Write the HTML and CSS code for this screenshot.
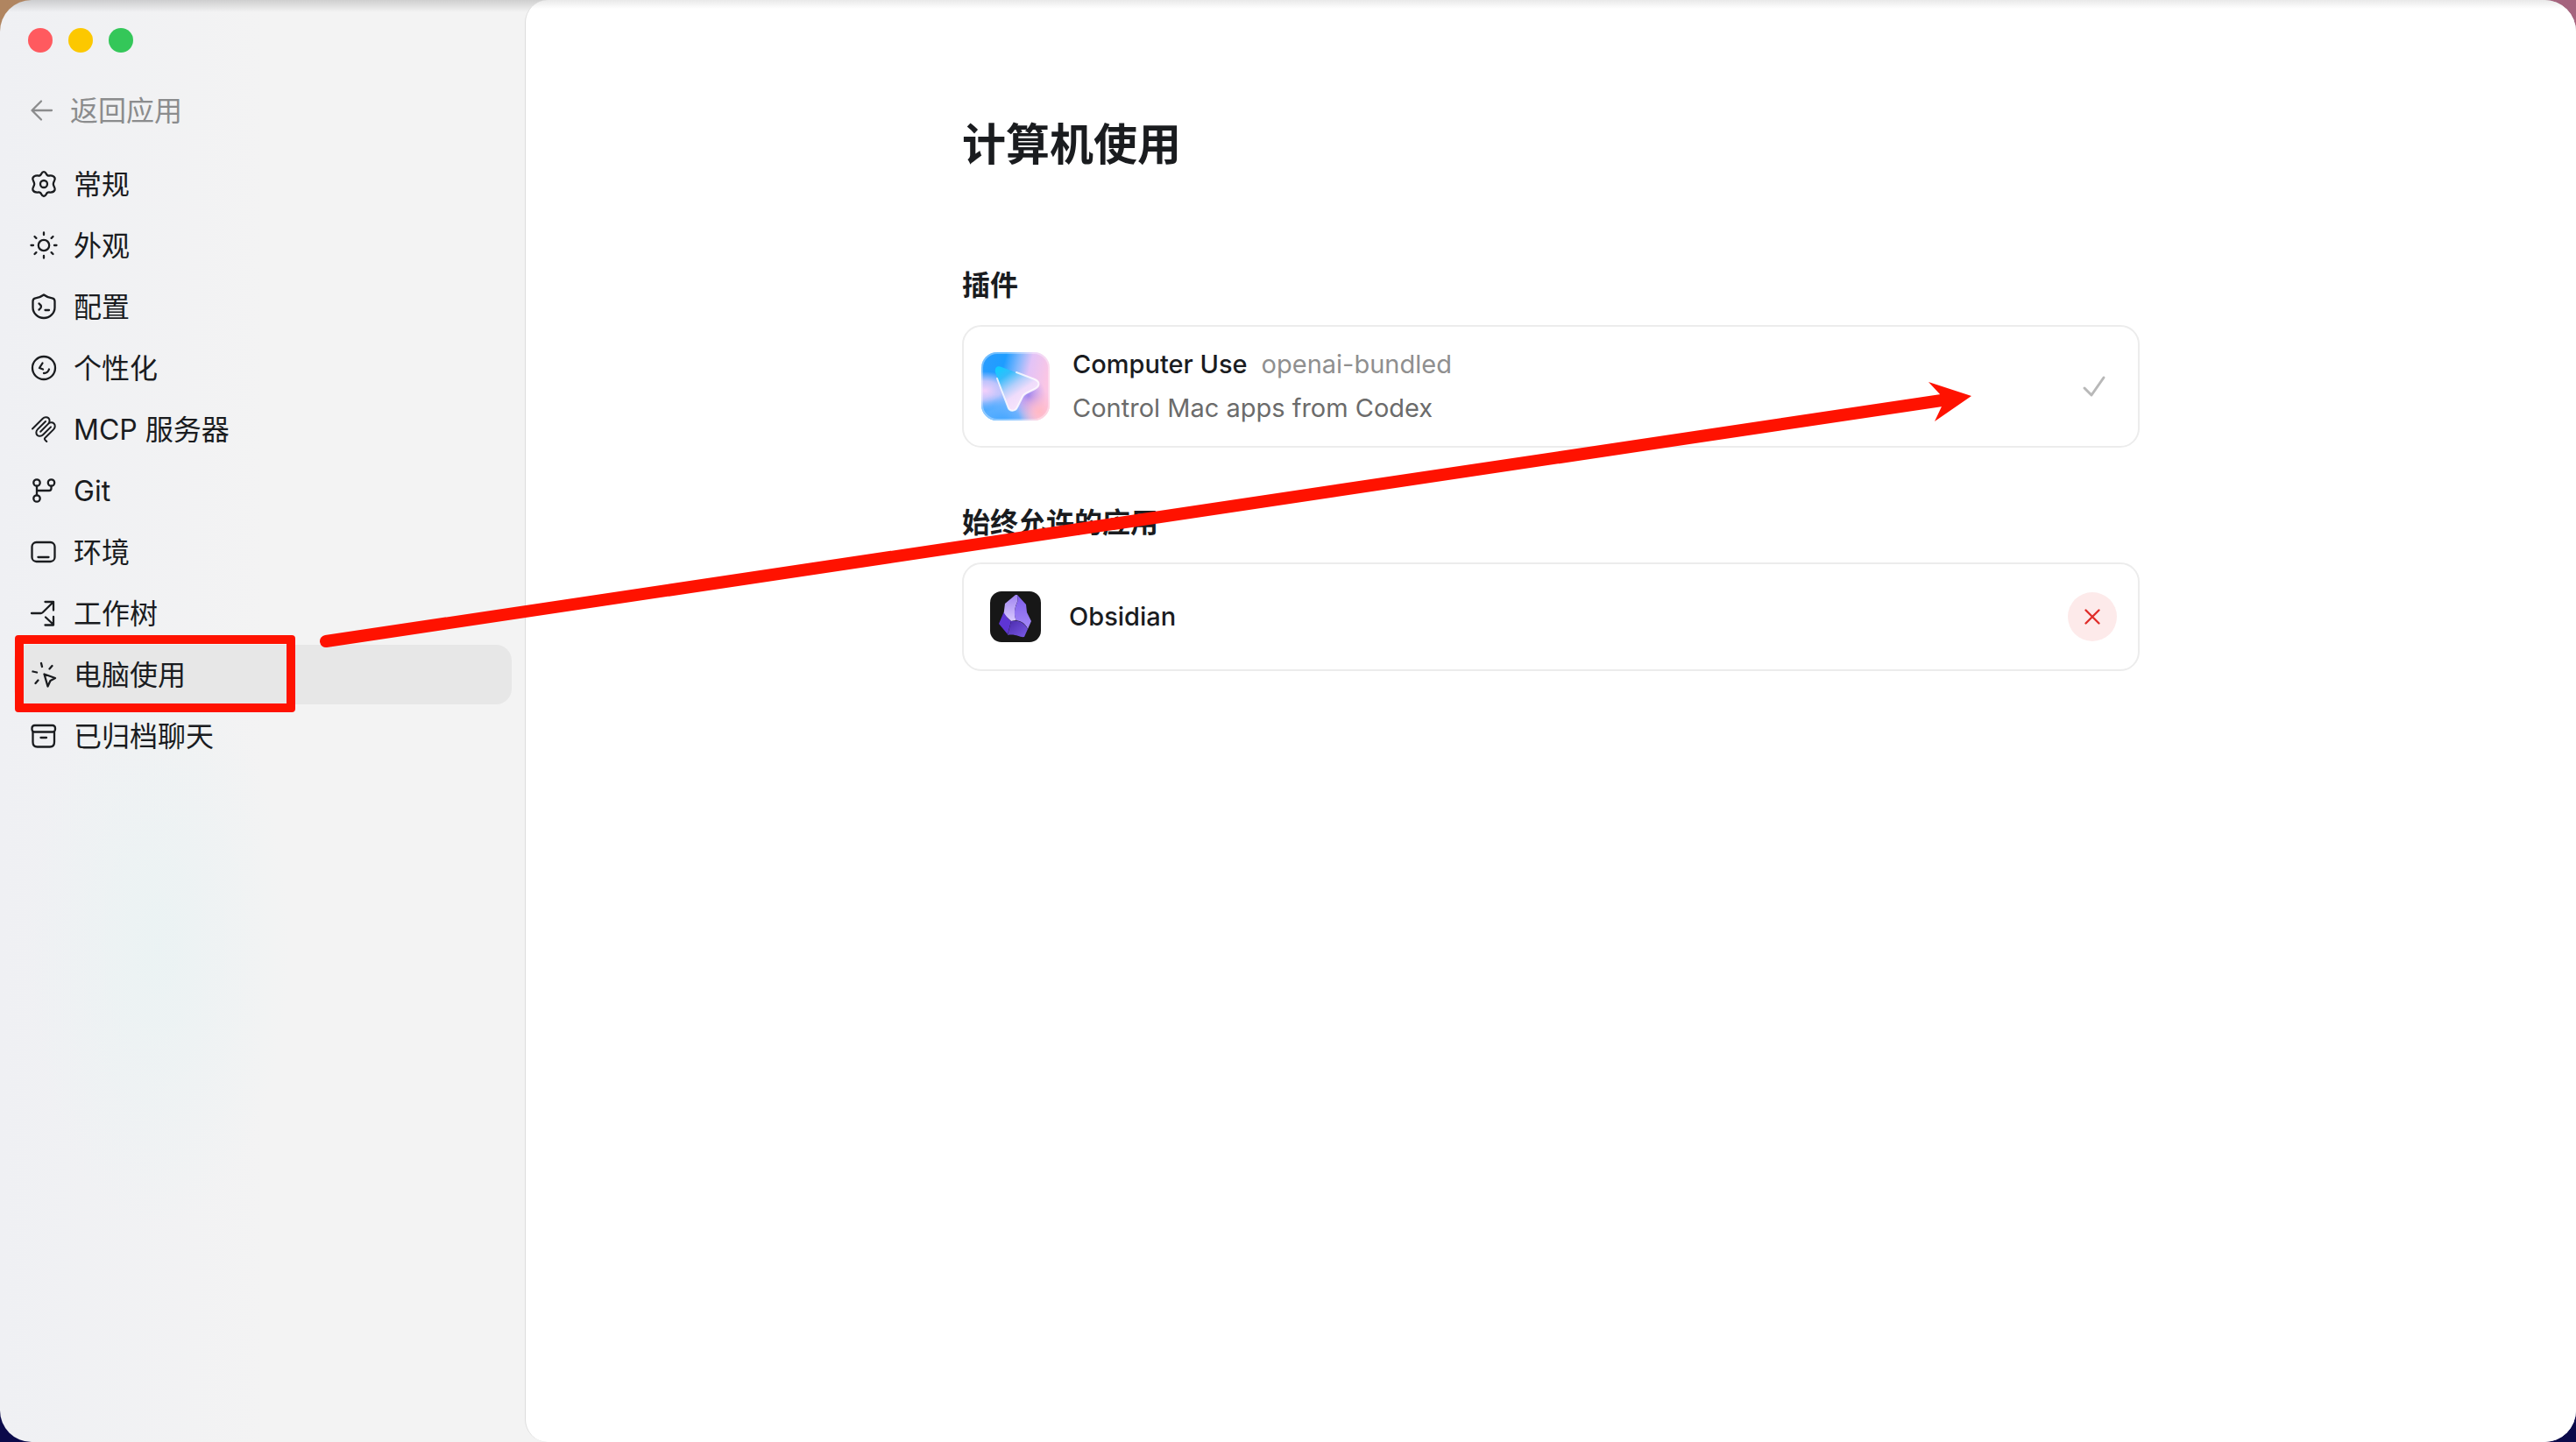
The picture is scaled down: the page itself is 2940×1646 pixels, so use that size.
FILE: index.html
```html
<!DOCTYPE html>
<html lang="zh-CN">
<head>
<meta charset="utf-8">
<title>计算机使用</title>
<link rel="stylesheet" href="styles.css">
</head>
<body>
<div class="window">
  <aside class="sidebar">
    <div class="lights">
      <button class="light light-close" aria-label="关闭"></button>
      <button class="light light-min" aria-label="最小化"></button>
      <button class="light light-max" aria-label="缩放"></button>
    </div>
    <a class="back" href="#">
      <svg class="icon" viewBox="0 0 32 32"><path d="M27 16H5M15 5.500L4.500 16L15 26.500"/></svg>
      <span class="label">返回应用</span>
    </a>
    <nav class="nav">
      <a class="item" href="#">
        <svg class="icon" viewBox="0 0 32 32"><path d="M13.300 4.200C14.600 1.300 17.400 1.300 18.700 4.200C19.500 6.200 20.500 6.800 22.600 6.500C25.800 6.200 27.600 6.900 28.600 9.300C29.400 11.300 26.900 13 26.800 16C26.900 19 29.400 20.700 28.600 22.700C27.600 25.100 25.800 25.800 22.600 25.500C20.500 25.200 19.500 25.800 18.700 27.800C17.400 30.700 14.600 30.700 13.300 27.800C12.500 25.800 11.500 25.200 9.400 25.500C6.200 25.800 4.400 25.100 3.400 22.700C2.600 20.700 5.100 19 5.200 16C5.100 13 2.600 11.300 3.400 9.300C4.400 6.900 6.200 6.200 9.400 6.500C11.500 6.800 12.500 6.200 13.300 4.200Z"/><circle cx="16" cy="16" r="4"/></svg>
        <span class="label">常规</span>
      </a>
      <a class="item" href="#">
        <svg class="icon" viewBox="0 0 32 32"><circle cx="16" cy="16" r="6.200"/><path d="M16 1.500V4M16 28V30.500M1.500 16H4M28 16H30.500M5.500 6L7.400 7.900M24.600 24.100L26.500 26M5.500 26L7.400 24.100M24.600 7.900L26.500 6"/></svg>
        <span class="label">外观</span>
      </a>
      <a class="item" href="#">
        <svg class="icon" viewBox="0 0 32 32"><path d="M16 2.500C18.500 4.500 22.500 5.800 25.500 6.300C27.500 6.700 28.500 7.800 28.500 10V17C28.500 23.500 23 29 16 29S3.500 23.500 3.500 17V10C3.500 7.800 4.500 6.700 6.500 6.300C9.500 5.800 13.500 4.500 16 2.500Z"/><path d="M10.500 12.500C12.500 14 13 15 13 16S12.500 18 10.500 19.500M17.500 20H22"/></svg>
        <span class="label">配置</span>
      </a>
      <a class="item" href="#">
        <svg class="icon" viewBox="0 0 32 32"><circle cx="16" cy="16" r="13"/><path d="M14.500 10.500L11 16L15 17.500M16 22C19 22 21 20.500 22 17.500"/></svg>
        <span class="label">个性化</span>
      </a>
      <a class="item" href="#">
        <svg class="icon icon-fine" viewBox="0 0 32 32"><path d="M3 15.500L14.800 3.700C16.800 1.700 19.800 1.700 21.400 3.300C23 4.900 23 7.900 21 9.900L12.200 18.700M21 9.900C23 7.900 26 7.900 27.600 9.500C29.200 11.100 29.200 14.100 27.200 16.100L17.500 25.800C16.700 26.600 16.700 27.400 17.500 28.200L19.300 30M18 7L8.900 16.100C6.900 18.100 6.900 21.100 8.500 22.700C10.100 24.300 13.100 24.300 15.100 22.300L24 13.400"/></svg>
        <span class="label">MCP 服务器</span>
      </a>
      <a class="item" href="#">
        <svg class="icon" viewBox="0 0 32 32"><circle cx="8" cy="7" r="3.700"/><circle cx="24.500" cy="7" r="3.700"/><circle cx="8" cy="25" r="3.700"/><path d="M8 10.700V21.300M8 16H22C23.500 16 24.500 15 24.500 13.500V10.700"/></svg>
        <span class="label">Git</span>
      </a>
      <a class="item" href="#">
        <svg class="icon" viewBox="0 0 32 32"><rect x="2.500" y="5" width="26" height="22" rx="5"/><path d="M9.500 22H21.500"/></svg>
        <span class="label">环境</span>
      </a>
      <a class="item" href="#">
        <svg class="icon" viewBox="0 0 32 32"><path d="M2 16H12.500C13.500 16 14 15.700 14.800 15L26.500 3.500M17.500 3H27V12.500M18 20.500L26.500 28.500M17.500 29.500H27V20"/></svg>
        <span class="label">工作树</span>
      </a>
      <a class="item item-active" href="#" aria-current="page">
        <svg class="icon" viewBox="0 0 32 32"><path d="M16.500 15.500L29 20L23.500 23L20.500 29.500ZM13 3L14 7M25.500 6L22.500 9.500M3.500 12.500L8 13.500M9.500 22.500L6.500 26"/></svg>
        <span class="label">电脑使用</span>
      </a>
      <a class="item" href="#">
        <svg class="icon" viewBox="0 0 32 32"><rect x="2.500" y="4" width="26.500" height="7.500" rx="3"/><path d="M3.500 11.500V23C3.500 26.500 5 28.500 8.500 28.500H23C26.500 28.500 28 26.500 28 23V11.500M12.500 18H19"/></svg>
        <span class="label">已归档聊天</span>
      </a>
    </nav>
  </aside>
  <main class="main">
    <div class="content">
      <h1 class="title">计算机使用</h1>
      <section class="group">
        <h2 class="heading">插件</h2>
        <div class="card card-plugin">
          <svg class="plugin-icon" viewBox="0 0 78 78" aria-hidden="true">
            <defs>
              <linearGradient id="sky" x1="0" y1="0" x2="1" y2="0.250"><stop offset="0" stop-color="#2b9cff"/><stop offset="0.350" stop-color="#1e9dff"/><stop offset="0.550" stop-color="#86b8fd"/><stop offset="0.720" stop-color="#e2c3f7"/><stop offset="1" stop-color="#fbc6e4"/></linearGradient>
              <radialGradient id="pink"><stop offset="0" stop-color="#f3d0fa"/><stop offset="0.500" stop-color="#e4cdfb" stop-opacity="0.800"/><stop offset="1" stop-color="#e4cdfb" stop-opacity="0"/></radialGradient>
              <radialGradient id="blue"><stop offset="0" stop-color="#3fa5ff"/><stop offset="0.500" stop-color="#5fb0ff" stop-opacity="0.900"/><stop offset="1" stop-color="#7db8ff" stop-opacity="0"/></radialGradient>
              <radialGradient id="shade"><stop offset="0" stop-color="#8673ee" stop-opacity="0.800"/><stop offset="1" stop-color="#a98bf2" stop-opacity="0"/></radialGradient>
              <radialGradient id="peach"><stop offset="0" stop-color="#ffb9c4"/><stop offset="1" stop-color="#ffb9d0" stop-opacity="0"/></radialGradient>
              <linearGradient id="pointer" x1="0" y1="0" x2="0.700" y2="1"><stop offset="0" stop-color="#08d0ff"/><stop offset="0.250" stop-color="#35bcfb"/><stop offset="0.480" stop-color="#b4cffb"/><stop offset="0.650" stop-color="#efdcfb"/><stop offset="1" stop-color="#fbe8fb"/></linearGradient>
              <clipPath id="tile"><rect width="78" height="78" rx="18"/></clipPath>
            </defs>
            <g clip-path="url(#tile)">
              <rect width="78" height="78" fill="url(#sky)"/>
              <ellipse cx="4" cy="44" rx="36" ry="22" fill="url(#pink)"/>
              <ellipse cx="24" cy="80" rx="42" ry="32" fill="url(#blue)"/>
              <ellipse cx="54" cy="50" rx="20" ry="22" fill="url(#shade)"/>
              <ellipse cx="66" cy="68" rx="24" ry="24" fill="url(#peach)"/>
            </g>
            <rect x="1" y="1" width="76" height="76" rx="17" fill="none" stroke="#fff" stroke-opacity="0.350" stroke-width="2"/>
            <path d="M16 23C15 18 18 15 23 17L61 31C67 33.500 67 39 61 42L51 47C48 48.500 47 50 46 53L41 63C39 68 32 68 30.500 63Z" fill="url(#pointer)"/>
            <path d="M18 30L30.500 63C32 68 39 68 41 63L46 53C47 50 48 48.500 51 47L61 42C67 39 67 33.500 61 31L40 23" fill="none" stroke="#fff" stroke-opacity="0.800" stroke-width="2" stroke-linecap="round"/>
          </svg>
          <div class="plugin-text">
            <div class="plugin-name"><strong class="name">Computer Use</strong><span class="source">openai-bundled</span></div>
            <p class="desc">Control Mac apps from Codex</p>
          </div>
          <svg class="check" viewBox="0 0 32 32" role="img" aria-label="已安装"><path d="M5 18L13 26L27 6"/></svg>
        </div>
      </section>
      <section class="group">
        <h2 class="heading">始终允许的应用</h2>
        <div class="card card-app">
          <svg class="app-icon" viewBox="0 0 58 58" aria-hidden="true">
            <defs>
              <linearGradient id="pale" x1="0.500" y1="0" x2="0.500" y2="1"><stop offset="0" stop-color="#a084f0"/><stop offset="1" stop-color="#d8c9ff"/></linearGradient>
              <linearGradient id="violet" x1="0.500" y1="0" x2="0.500" y2="1"><stop offset="0" stop-color="#7d5cea"/><stop offset="1" stop-color="#a58af8"/></linearGradient>
              <linearGradient id="base" x1="0" y1="0" x2="1" y2="1"><stop offset="0" stop-color="#4a2bab"/><stop offset="1" stop-color="#7a5ae6"/></linearGradient>
            </defs>
            <rect width="58" height="58" rx="13" fill="#171717"/>
            <path d="M29 4L17 14L15.500 26L24 34L29.500 33C27 25 28 18 31.500 11L31 4Z" fill="url(#pale)"/>
            <path d="M31 4L41 15L42 24L47 34L43 43C40 36 35 34 29.500 33C26 24 29 17 31.500 11Z" fill="url(#violet)"/>
            <path d="M15.500 24L10 37L20 49L24 34C20 31 18 28 15.500 24Z" fill="#5e35d4"/>
            <path d="M24 34C33 32 39 36 43 43L39 52C34 53 29 48 20 50Z" fill="url(#base)"/>
          </svg>
          <span class="app-name">Obsidian</span>
          <button class="remove" aria-label="移除 Obsidian"><svg class="cross" viewBox="0 0 20 20"><path d="M2.500 2.500L17.500 17.500M17.500 2.500L2.500 17.500"/></svg></button>
        </div>
      </section>
    </div>
  </main>
  <div class="mark-box"></div>
  <svg class="mark-arrow" aria-hidden="true">
    <path d="M372 732L2216 457" fill="none" stroke="#ff1200" stroke-width="14" stroke-linecap="round"/>
    <path d="M2250 452L2201 436L2214 450L2216 464L2208 481Z" fill="#ff1200"/>
  </svg>
</div>
</body>
</html>
```
FILE: styles.css
```css
* {
  box-sizing: border-box;
}

body {
  margin: 0;
  background: linear-gradient(90deg, #b08560, #a5647e) top / 100% 50% no-repeat, #0b0a4a;
  font-family: Inter, "Noto Sans CJK SC", sans-serif;
  font-size: 32px;
  line-height: 48px;
  color: #1a1c1f;
}

h1, h2, p {
  margin: 0;
}

button {
  padding: 0;
  border: 0;
}

a {
  color: inherit;
  text-decoration: none;
}

.window {
  position: relative;
  display: flex;
  min-height: 100vh;
  overflow: hidden;
  border-radius: 36px;
  background:
    linear-gradient(rgba(0, 0, 0, 0.15), rgba(0, 0, 0, 0) 14px),
    radial-gradient(150px 320px at 180px 1080px, rgba(232, 243, 243, 0.7), rgba(232, 243, 243, 0)),
    linear-gradient(90deg, #eff0f3, #f3f3f3 300px);
}

.sidebar {
  flex: none;
  width: 599px;
  padding: 32px 15px 32px 16px;
}

.lights {
  display: flex;
  gap: 18px;
  padding-left: 16px;
}

.light {
  width: 28px;
  height: 28px;
  border-radius: 50%;
}

.light-close { background: #ff5a5f; }
.light-min { background: #fcc800; }
.light-max { background: #34c759; }

.back {
  display: flex;
  align-items: center;
  gap: 16px;
  height: 68px;
  margin-top: 32px;
  padding-left: 16px;
  color: #8b8c8d;
}

.label {
  padding-top: 2px;
}

.icon {
  flex: none;
  width: 32px;
  height: 32px;
  fill: none;
  stroke: currentColor;
  stroke-width: 2.3;
  stroke-linecap: round;
  stroke-linejoin: round;
}

.icon-fine {
  stroke-width: 2;
}

.nav {
  display: flex;
  flex-direction: column;
  gap: 2px;
  margin-top: 16px;
}

.item {
  display: flex;
  align-items: center;
  gap: 18px;
  height: 68px;
  padding-left: 18px;
  border-radius: 18px;
}

.item-active {
  background: #e7e7e7;
}

.main {
  flex: 1;
  padding: 128px 48px;
  border-left: 1px solid #dcdcdc;
  border-radius: 26px;
  background: linear-gradient(#e9e9e9, #fff 10px);
}

.content {
  max-width: 1344px;
  margin: 0 auto;
}

.title {
  font-size: 50px;
  line-height: 74px;
  font-weight: 600;
}

.group {
  margin-top: 62px;
}

.title + .group {
  margin-top: 100px;
}

.heading {
  margin-bottom: 21px;
  font-size: 32px;
  line-height: 48px;
  font-weight: 600;
}

.card {
  display: flex;
  align-items: center;
  border: 2px solid #ececec;
  border-radius: 22px;
  background: #fff;
}

.card-plugin {
  gap: 26px;
  padding: 18px 34px 18px 20px;
}

.card-app {
  gap: 32px;
  padding: 31px 24px 31px 30px;
}

.plugin-icon {
  flex: none;
  width: 78px;
  height: 78px;
}

.plugin-text {
  flex: 1;
  font-size: 29px;
  line-height: 50px;
}

.plugin-name {
  display: flex;
  gap: 16px;
}

.name {
  font-weight: 500;
}

.source {
  color: #8f8f8f;
}

.desc {
  color: #6b6b6b;
}

.check {
  width: 32px;
  height: 32px;
  fill: none;
  stroke: #b8b8b8;
  stroke-width: 3;
  stroke-linecap: round;
  stroke-linejoin: round;
}

.app-icon {
  flex: none;
  width: 58px;
  height: 58px;
}

.app-name {
  flex: 1;
  font-size: 29px;
  font-weight: 500;
}

.remove {
  display: grid;
  place-items: center;
  width: 56px;
  height: 56px;
  border-radius: 50%;
  background: #fdeaea;
}

.cross {
  width: 20px;
  height: 20px;
  fill: none;
  stroke: #e02e2a;
  stroke-width: 2.4;
  stroke-linecap: round;
}

.mark-box {
  position: absolute;
  left: 17px;
  top: 725px;
  width: 320px;
  height: 88px;
  border: 10px solid #ff1200;
  border-radius: 4px;
  pointer-events: none;
}

.mark-arrow {
  position: absolute;
  left: 0;
  top: 0;
  width: 100%;
  height: 100%;
  pointer-events: none;
}
```
